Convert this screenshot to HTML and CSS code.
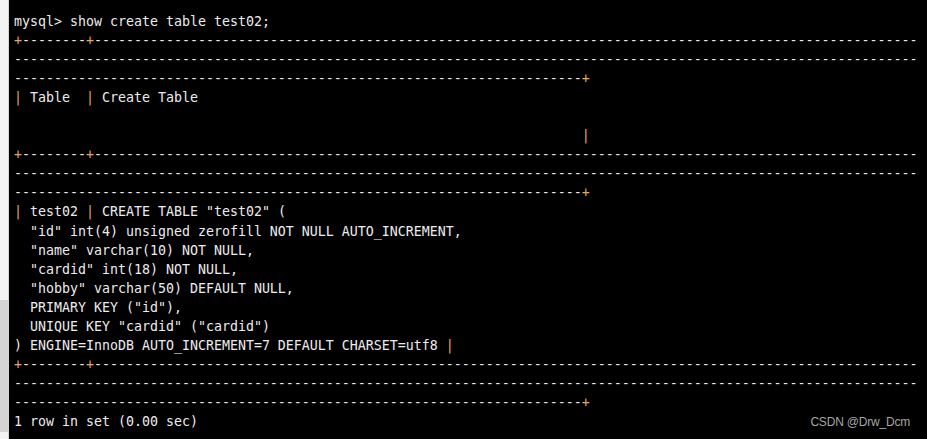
FILE: index.html
```html
<!DOCTYPE html>
<html>
<head>
<meta charset="utf-8">
<link rel="stylesheet" href="styles.css">
</head>
<body>
<div class="window">
  <div class="gutter">
    <div class="gutter-top"></div>
    <div class="gutter-mid"></div>
    <div class="gutter-bottom"></div>
  </div>
  <div class="terminal">
<pre class="out">mysql&gt; show create table test02;
<span class="p">+</span>--------<span class="p">+</span>-------------------------------------------------------------------------------------------------------
-----------------------------------------------------------------------------------------------------------------
-----------------------------------------------------------------------<span class="p">+</span>
<span class="p">|</span> Table  <span class="p">|</span> Create Table

                                                                       <span class="p">|</span>
<span class="p">+</span>--------<span class="p">+</span>-------------------------------------------------------------------------------------------------------
-----------------------------------------------------------------------------------------------------------------
-----------------------------------------------------------------------<span class="p">+</span>
<span class="p">|</span> test02 <span class="p">|</span> CREATE TABLE "test02" (
  "id" int(4) unsigned zerofill NOT NULL AUTO_INCREMENT,
  "name" varchar(10) NOT NULL,
  "cardid" int(18) NOT NULL,
  "hobby" varchar(50) DEFAULT NULL,
  PRIMARY KEY ("id"),
  UNIQUE KEY "cardid" ("cardid")
) ENGINE=InnoDB AUTO_INCREMENT=7 DEFAULT CHARSET=utf8 <span class="p">|</span>
<span class="p">+</span>--------<span class="p">+</span>-------------------------------------------------------------------------------------------------------
-----------------------------------------------------------------------------------------------------------------
-----------------------------------------------------------------------<span class="p">+</span>
1 row in set (0.00 sec)</pre>
    <div class="watermark">CSDN @Drw_Dcm</div>
  </div>
</div>
</body>
</html>
```

FILE: styles.css
```css
html, body {
  margin: 0;
  padding: 0;
  background: #000;
}

.window {
  display: flex;
  width: 927px;
  height: 439px;
  overflow: hidden;
}

.gutter {
  width: 8px;
  flex: none;
  display: flex;
  flex-direction: column;
  border-right: 1px solid #d6d6d6;
}

.gutter-top {
  height: 300px;
  background: #f3f3f3;
}

.gutter-mid {
  flex: 1;
  background: #d4d4d4;
}

.gutter-bottom {
  height: 7px;
  background: #f3f3f3;
}

.terminal {
  position: relative;
  flex: 1;
  background: #000;
  padding: 12px 0 0 5px;
}

.out {
  margin: 0;
  font-family: "DejaVu Sans Mono", monospace;
  font-size: 13.29px;
  line-height: 19.05px;
  color: #ececec;
  white-space: pre;
}

.p {
  color: #eaa45e;
}

.watermark {
  position: absolute;
  right: 17px;
  top: 415px;
  font-family: "Liberation Sans", Arial, sans-serif;
  font-size: 12px;
  letter-spacing: -0.2px;
  color: #a6a6a6;
}
```
